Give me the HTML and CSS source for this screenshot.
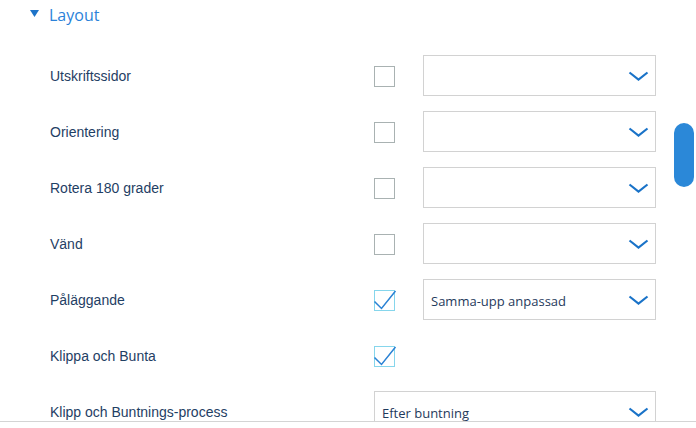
FILE: index.html
```html
<!DOCTYPE html>
<html>
<head>
<meta charset="utf-8">
<link rel="stylesheet" href="styles.css">
</head>
<body>
<div class="panel">
  <div class="header">
    <svg class="caret" width="9" height="7" viewBox="0 0 9 7"><polygon points="0,0 9,0 4.5,7" fill="#1e73c8"/></svg>
    <span class="title">Layout</span>
  </div>
  <div class="rows">
    <div class="row">
      <span class="label">Utskriftssidor</span>
      <span class="box"></span>
      <div class="select"><span class="value"></span><svg class="chev" width="21" height="10" viewBox="0 0 21 10"><polyline points="1.5,1.5 10.5,8.5 19.5,1.5" fill="none" stroke="#1a73c8" stroke-width="2.2"/></svg></div>
    </div>
    <div class="row">
      <span class="label">Orientering</span>
      <span class="box"></span>
      <div class="select"><span class="value"></span><svg class="chev" width="21" height="10" viewBox="0 0 21 10"><polyline points="1.5,1.5 10.5,8.5 19.5,1.5" fill="none" stroke="#1a73c8" stroke-width="2.2"/></svg></div>
    </div>
    <div class="row">
      <span class="label">Rotera 180 grader</span>
      <span class="box"></span>
      <div class="select"><span class="value"></span><svg class="chev" width="21" height="10" viewBox="0 0 21 10"><polyline points="1.5,1.5 10.5,8.5 19.5,1.5" fill="none" stroke="#1a73c8" stroke-width="2.2"/></svg></div>
    </div>
    <div class="row">
      <span class="label">Vänd</span>
      <span class="box"></span>
      <div class="select"><span class="value"></span><svg class="chev" width="21" height="10" viewBox="0 0 21 10"><polyline points="1.5,1.5 10.5,8.5 19.5,1.5" fill="none" stroke="#1a73c8" stroke-width="2.2"/></svg></div>
    </div>
    <div class="row">
      <span class="label">Påläggande</span>
      <span class="box checked"><svg class="tick" width="22" height="22" viewBox="0 0 22 22"><polyline points="0.5,11.5 7.5,18.5 21.5,1" fill="none" stroke="#2a82d4" stroke-width="1.5"/></svg></span>
      <div class="select"><span class="value">Samma-upp anpassad</span><svg class="chev" width="21" height="10" viewBox="0 0 21 10"><polyline points="1.5,1.5 10.5,8.5 19.5,1.5" fill="none" stroke="#1a73c8" stroke-width="2.2"/></svg></div>
    </div>
    <div class="row">
      <span class="label">Klippa och Bunta</span>
      <span class="box checked"><svg class="tick" width="22" height="22" viewBox="0 0 22 22"><polyline points="0.5,11.5 7.5,18.5 21.5,1" fill="none" stroke="#2a82d4" stroke-width="1.5"/></svg></span>
    </div>
    <div class="row">
      <span class="label">Klipp och Buntnings-process</span>
      <div class="select wide"><span class="value">Efter buntning</span><svg class="chev" width="21" height="10" viewBox="0 0 21 10"><polyline points="1.5,1.5 10.5,8.5 19.5,1.5" fill="none" stroke="#1a73c8" stroke-width="2.2"/></svg></div>
    </div>
  </div>
  <div class="thumb"></div>
</div>
</body>
</html>
```
FILE: styles.css
```css
html, body {
  margin: 0;
  padding: 0;
  background: #ffffff;
}
body {
  width: 696px;
  height: 428px;
  overflow: hidden;
}
.panel {
  position: relative;
  height: 421px;
  overflow: hidden;
  border-bottom: 1px solid #d4d4d4;
}
.header {
  display: flex;
  align-items: center;
  height: 30px;
  padding-left: 30px;
  margin-bottom: 25px;
}
.caret {
  display: block;
  margin-top: -3px;
}
.title {
  margin-left: 10px;
  font-family: "Open Sans", sans-serif;
  font-size: 16px;
  color: #2b82d9;
  line-height: 30px;
}
.rows {
  display: flex;
  flex-direction: column;
  gap: 15px;
  padding-left: 50px;
}
.row {
  display: grid;
  grid-template-columns: 324px 49px 233px;
  align-items: center;
  height: 41px;
}
.label {
  font-family: "Liberation Sans", Arial, sans-serif;
  font-size: 14px;
  color: #1f4064;
  padding-top: 1px;
}
.box {
  position: relative;
  box-sizing: border-box;
  width: 21px;
  height: 21px;
  border: 1px solid #a9b2b2;
  margin-top: 2px;
}
.box.checked {
  border-color: #86d6ec;
}
.tick {
  position: absolute;
  left: -1px;
  top: -1px;
  overflow: visible;
}
.select {
  box-sizing: border-box;
  height: 41px;
  border: 1px solid #d2d2d2;
  display: flex;
  align-items: center;
  justify-content: space-between;
  padding: 0 6px 0 7px;
}
.select.wide {
  grid-column: 2 / 4;
}
.value {
  font-family: "Open Sans", sans-serif;
  font-size: 13px;
  color: #1f3a5c;
  padding-top: 2px;
}
.chev {
  display: block;
}
.thumb {
  position: absolute;
  left: 674px;
  top: 123px;
  width: 20px;
  height: 64px;
  border-radius: 10px;
  background: #2b88d8;
}
```
